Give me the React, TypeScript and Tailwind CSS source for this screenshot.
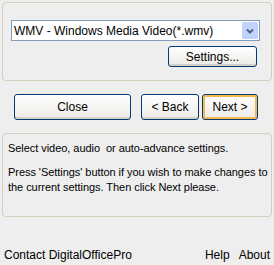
// Export wizard — format step, XP-style panel.
const FONT = { fontFamily: '"Liberation Sans", Arial, sans-serif' };

function XpButton({ children, className = '', focus = false }: { children: React.ReactNode; className?: string; focus?: boolean }) {
  return (
    <button
      type="button"
      className={`flex items-center justify-center rounded-[3px] border border-[#003c74] bg-gradient-to-b from-[#ffffff] to-[#ecebe6] text-[12px] text-black ${
        focus ? 'shadow-[inset_0_0_0_2px_#f8b84e]' : 'shadow-[inset_0_-2px_0_#d6d0c5]'
      } ${className}`}
    >
      {children}
    </button>
  );
}

export default function App() {
  return (
    <div className="h-[265px] w-[274px] bg-[#eeeeee] text-black" style={FONT}>
      <div className="flex flex-col px-[2px] pt-[2px]">
        <section
          aria-label="output format"
          className="flex h-[79px] flex-col rounded-[4px] border border-[#d0d0bf] pl-[8px] pr-[14px] pt-[17px]"
        >
          <div className="flex h-[21px] w-[249px] items-center border border-[#7f9db9] bg-white pl-[2px] pr-[1px]">
            <span className="flex-1 text-[12px] leading-none">WMV - Windows Media Video(*.wmv)</span>
            <span className="flex h-[17px] w-[16px] items-center justify-center rounded-[2px] bg-[#c1d3fb]">
              <svg width="8" height="6" viewBox="0 0 8 6">
                <path d="M1 1.5 L4 4.5 L7 1.5" fill="none" stroke="#4d6185" strokeWidth="2" />
              </svg>
            </span>
          </div>
          <div className="mt-[5px] flex justify-end">
            <XpButton className="h-[21px] w-[89px]">Settings...</XpButton>
          </div>
        </section>

        <div className="mt-[13px] flex h-[26px] items-stretch pl-[12px]">
          <XpButton className="w-[117px]">Close</XpButton>
          <XpButton className="ml-[10px] w-[58px]">&lt; Back</XpButton>
          <XpButton focus className="ml-[3px] w-[56px]">Next &gt;</XpButton>
        </div>

        <section
          aria-label="instructions"
          className="mt-[13px] h-[84px] rounded-[4px] border border-[#d0d0bf] pl-[5px] pr-0 pt-[7px] text-[11px] leading-[15px] tracking-[-0.05px]"
        >
          <p>Select video, audio&nbsp; or auto-advance settings.</p>
          <p className="mt-[9px]">
            Press 'Settings' button if you wish to make changes to the current settings. Then click Next please.
          </p>
        </section>

        <footer className="mt-[31px] flex items-center text-[12px] leading-[15px]">
          <span className="pl-[2px]">Contact DigitalOfficePro</span>
          <span className="ml-auto">Help</span>
          <span className="ml-[9px] pr-[2px]">About</span>
        </footer>
      </div>
    </div>
  );
}
